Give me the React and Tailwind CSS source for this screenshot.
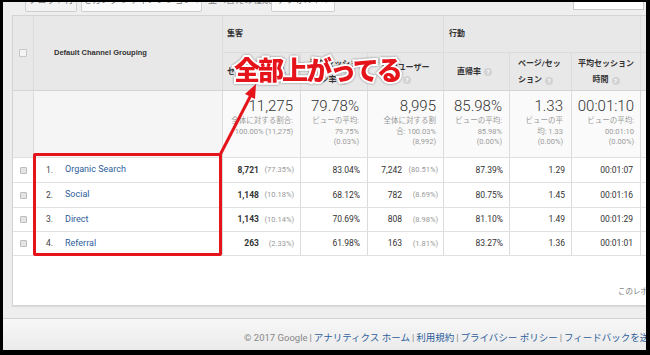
const sans = "font-[family-name:Roboto,'Noto_Sans_CJK_JP',sans-serif]";

function Help() {
  return (
    <span className="ml-[3px] inline-flex h-[8px] w-[8px] items-center justify-center rounded-full bg-[#d3d3d3] align-[-1px] text-[6px] font-bold leading-none text-white">
      ?
    </span>
  );
}

function Check({ head }) {
  return (
    <span
      className={
        head
          ? "block h-[8px] w-[8px] rounded-[1px] border border-[#c6c6c6] bg-[#f4f4f4]"
          : "block h-[7px] w-[7px] rounded-[1px] border border-[#bdbdbd] bg-[#e4e4e4]"
      }
    />
  );
}

const summary = [
  { big: "11,275", sub: ["全体に対する割合:", "100.00% (11,275)"], pr: "pr-[7px]" },
  { big: "79.78%", sub: ["ビューの平均:", "79.75%", "(0.03%)"], pr: "pr-[8px]" },
  { big: "8,995", sub: ["全体に対する割", "合: 100.03%", "(8,992)"], pr: "pr-[7px]" },
  { big: "85.98%", sub: ["ビューの平均:", "85.98%", "(0.00%)"], pr: "pr-[7px]" },
  { big: "1.33", sub: ["ビューの平", "均: 1.33", "(0.00%)"], pr: "pr-[8px]" },
  { big: "00:01:10", sub: ["ビューの平均:", "00:01:10", "(0.00%)"], pr: "pr-[6px]" },
];

const rows = [
  { name: "Organic Search", s: "8,721", sp: "(77.35%)", r: "83.04%", u: "7,242", up: "(80.51%)", b: "87.39%", p: "1.29", d: "00:01:07", h: "h-[25px]" },
  { name: "Social", s: "1,148", sp: "(10.18%)", r: "68.12%", u: "782", up: "(8.69%)", b: "80.75%", p: "1.45", d: "00:01:16", h: "h-[25px]" },
  { name: "Direct", s: "1,143", sp: "(10.14%)", r: "70.69%", u: "808", up: "(8.98%)", b: "81.10%", p: "1.49", d: "00:01:29", h: "h-[24px]" },
  { name: "Referral", s: "263", sp: "(2.33%)", r: "61.98%", u: "163", up: "(1.81%)", b: "83.27%", p: "1.36", d: "00:01:01", h: "h-[25px]" },
];

const cols = "grid grid-cols-[20px_189px_78px_67px_76px_66px_62px_69px_40px]";
const line = "border-l border-[#dcdcdc]";

export default function App() {
  return (
    <div className={`h-[355px] w-[650px] overflow-hidden bg-black pb-[5px] pl-[3px] pr-[4px] pt-[2px] ${sans}`}>
      <div className="flex h-full flex-col overflow-hidden bg-[#eeeeee]">
        {/* toolbar, cut off at the top */}
        <div className="flex h-[13px] shrink-0 items-end overflow-hidden pb-[3px] text-[9px] text-[#777]">
          <div className="ml-[22px] flex h-[22px] w-[52px] shrink-0 items-center justify-center rounded-[2px] border border-[#cfcfcf] bg-[#f2f2f2]">
            プロット行
          </div>
          <div className="ml-[4px] flex h-[22px] w-[121px] shrink-0 items-center justify-center rounded-[2px] border border-[#cfcfcf] bg-[#fafafa]">
            セカンダリ ディメンション ▾
          </div>
          <div className="ml-[6px] flex h-[22px] w-[63px] shrink-0 items-center whitespace-nowrap">
            並べ替えの種類:
          </div>
          <div className="flex h-[22px] w-[64px] shrink-0 items-center justify-center rounded-[2px] border border-[#cfcfcf] bg-[#fafafa]">
            デフォルト ▾
          </div>
          <div className="mb-[2px] ml-auto mr-[2px] h-[22px] w-[71px] shrink-0 border border-[#c8c8c8] bg-white" />
        </div>

        {/* report card */}
        <div className="relative ml-[9px] h-[291px] shrink-0 overflow-hidden border-b border-l border-t border-[#d4d4d4] bg-white shadow-[0_1px_1px_rgba(0,0,0,0.08)]">
          <div className={`${cols} bg-[#e8e8e8] text-[8px] font-bold text-[#333]`}>
            {/* header row 1 + 2 */}
            <div className="row-span-2 flex items-center justify-center">
              <Check head />
            </div>
            <div className={`row-span-2 flex items-center pl-[20px] font-[family-name:'Liberation_Sans',Arial,sans-serif] text-[7.5px] ${line}`}>
              Default Channel Grouping
            </div>
            <div className={`col-span-3 flex h-[36px] items-center pl-[4px] ${line}`}>集客</div>
            <div className={`col-span-3 flex items-center pl-[5px] ${line}`}>行動</div>
            <div className={`flex items-center pl-[5px] whitespace-nowrap ${line}`}>コンバージョン</div>

            <div className={`flex h-[38px] items-center border-t border-[#d6d6d6] pl-[4px] ${line}`}>
              セッション<Help />
              <span className="ml-auto mr-[12px] text-[9px] font-normal text-[#666]">↓</span>
            </div>
            <div className={`flex flex-col items-center justify-center border-t border-[#d6d6d6] leading-[16px] ${line}`}>
              <span>新規セッショ</span>
              <span>
                ン率<Help />
              </span>
            </div>
            <div className={`flex flex-col items-center justify-center border-t border-[#d6d6d6] leading-[16px] ${line}`}>
              <span>新規ユーザー</span>
              <Help />
            </div>
            <div className={`flex items-center justify-center border-t border-[#d6d6d6] pr-[4px] ${line}`}>
              直帰率<Help />
            </div>
            <div className={`flex flex-col justify-center border-t border-[#d6d6d6] pl-[8px] leading-[16px] ${line}`}>
              <span>ページ/セッ</span>
              <span>
                ション<Help />
              </span>
            </div>
            <div className={`flex flex-col items-center justify-center border-t border-[#d6d6d6] leading-[16px] ${line}`}>
              <span>平均セッション</span>
              <span>
                時間<Help />
              </span>
            </div>
            <div className={`border-t border-[#d6d6d6] ${line}`} />
          </div>

          {/* summary row */}
          <div className={`${cols} h-[67px] border-t border-[#d4d4d4] text-right`}>
            <div className="bg-[#efefef]" />
            <div className={`bg-[#f5f5f5] ${line}`} />
            {summary.map((c) => (
              <div key={c.big} className={`bg-[#fafafa] pt-[6px] ${c.pr} ${line}`}>
                <div className="text-[15px] font-light leading-[18px] text-[#333]">{c.big}</div>
                <div className="mt-[1px] text-[7.5px] leading-[10.5px] text-[#9a9a9a]">
                  {c.sub.map((t) => (
                    <div key={t} className="whitespace-nowrap">
                      {t}
                    </div>
                  ))}
                </div>
              </div>
            ))}
            <div className={`bg-[#fafafa] ${line}`} />
          </div>

          {/* data rows */}
          {rows.map((r, i) => (
            <div key={r.name} className={`${cols} ${r.h} border-t border-[#e0e0e0] text-[8.5px] text-[#333] ${i === 3 ? "border-b" : ""}`}>
              <div className="flex items-center justify-center">
                <Check />
              </div>
              <div className={`flex items-center pl-[12px] ${line}`}>
                <span className="w-[19px] text-[#444]">{i + 1}.</span>
                <span className="text-[9px] text-[#2d5e9b]">{r.name}</span>
              </div>
              <div className={`flex items-center justify-end pr-[6px] ${line}`}>
                <span className="font-bold">{r.s}</span>
                <span className="w-[35px] text-right text-[7.5px] text-[#999]">{r.sp}</span>
              </div>
              <div className={`flex items-center justify-end pr-[7px] ${line}`}>{r.r}</div>
              <div className={`flex items-center justify-end pr-[5px] ${line}`}>
                <span>{r.u}</span>
                <span className="w-[36px] text-right text-[7.5px] text-[#999]">{r.up}</span>
              </div>
              <div className={`flex items-center justify-end pr-[6px] ${line}`}>{r.b}</div>
              <div className={`flex items-center justify-end pr-[6px] ${line}`}>{r.p}</div>
              <div className={`flex items-center justify-end pr-[7px] ${line}`}>{r.d}</div>
              <div className={line} />
            </div>
          ))}

          <div className="whitespace-nowrap pl-[605px] pt-[30px] text-[7.5px] text-[#777]">
            このレポートは 2017/03/06 10:21:33 に作成されました。
          </div>

          {/* annotation overlay */}
          <div className="absolute left-[20px] top-[137px] h-[103px] w-[189px] rounded-[2px] border-[3px] border-[#e5141b]" />
          <svg className="absolute left-[193px] top-[60px]" width="65" height="85" viewBox="0 0 65 85">
            <line x1="14" y1="79" x2="45" y2="19" stroke="#e5141b" strokeWidth="3" strokeLinecap="round" />
            <polygon points="50,8 49,23 39,18" fill="#e5141b" />
          </svg>
          <div className="absolute left-[221px] top-[40px] whitespace-nowrap font-[family-name:'Noto_Sans_CJK_JP',sans-serif] text-[26px] font-black leading-none tracking-[-2px] text-[#e5141b] drop-shadow-[0_0_1px_rgba(0,0,0,0.45)] [-webkit-text-stroke:4px_#fff] [paint-order:stroke_fill]">
            全部上がってる
          </div>
        </div>

        {/* footer */}
        <div className="mt-[12px] h-[32px] shrink-0 whitespace-nowrap border-t border-[#d2d2d2] bg-gradient-to-b from-[#f7f7f7] to-[#ebebeb] pl-[241px] pt-[13px] text-[9.5px] leading-[12px] text-[#888]">
          © 2017 Google<span className="mx-[2px]">|</span>
          <span className="text-[#2d5e9b]">アナリティクス ホーム</span>
          <span className="mx-[2px]">|</span>
          <span className="text-[#2d5e9b]">利用規約</span>
          <span className="mx-[2px]">|</span>
          <span className="text-[#2d5e9b]">プライバシー ポリシー</span>
          <span className="mx-[2px]">|</span>
          <span className="text-[#2d5e9b]">フィードバックを送信</span>
        </div>
      </div>
    </div>
  );
}
